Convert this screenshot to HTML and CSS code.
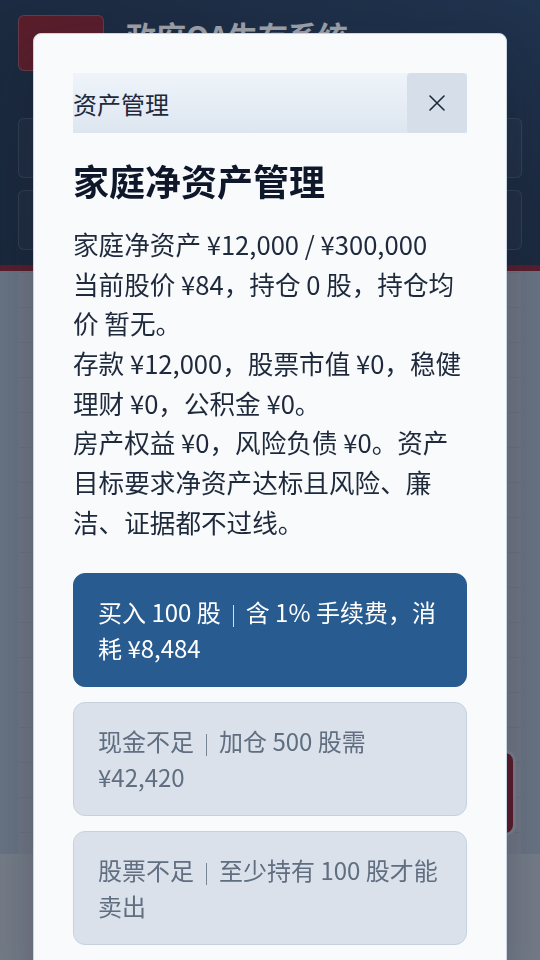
FILE: index.html
```html
<!DOCTYPE html>
<html lang="zh-CN">
<head>
<meta charset="utf-8">
<title>政府OA生存系统</title>
<link rel="stylesheet" href="styles.css">
</head>
<body>
<div class="app">
  <header class="topbar">
    <div class="brand">
      <div class="badge"></div>
      <div class="brand-text">
        <div class="brand-title">政府OA生存系统</div>
        <div class="brand-sub">第 1 天</div>
      </div>
    </div>
    <div class="stat"></div>
    <div class="stat"></div>
  </header>
  <div class="stripe"></div>
  <main class="main">
    <section class="panel">
      <button class="fab" type="button"></button>
    </section>
  </main>
  <nav class="bottombar"></nav>
</div>

<div class="backdrop">
  <div class="modal" role="dialog">
    <div class="modal-head">
      <div class="modal-label">资产管理</div>
      <button class="close" type="button" aria-label="关闭">
        <svg width="16" height="16" viewBox="0 0 16 16"><path d="M1 1 L15 15 M15 1 L1 15" stroke="#1e293b" stroke-width="1.6" fill="none" stroke-linecap="round"/></svg>
      </button>
    </div>
    <h2 class="title">家庭净资产管理</h2>
    <p class="desc">家庭净资产 ¥12,000 / ¥300,000<br>当前股价 ¥84，持仓 0 股，持仓均价 暂无。<br>存款 ¥12,000，股票市值 ¥0，稳健理财 ¥0，公积金 ¥0。<br>房产权益 ¥0，风险负债 ¥0。资产目标要求净资产达标且风险、廉洁、证据都不过线。</p>
    <div class="actions">
      <button class="act primary" type="button">买入 100 股<span class="sep"></span>含 1% 手续费，消耗 ¥8,484</button>
      <button class="act disabled" type="button">现金不足<span class="sep"></span>加仓 500 股需 ¥42,420</button>
      <button class="act disabled" type="button">股票不足<span class="sep"></span>至少持有 100 股才能卖出</button>
    </div>
  </div>
</div>
</body>
</html>
```

FILE: styles.css
```css
* { box-sizing: border-box; }
html, body { margin: 0; height: 100%; }
body {
  font-family: "Noto Sans CJK SC", "Noto Sans", sans-serif;
  background: #a7b4c0;
  overflow: hidden;
}
.app {
  height: 960px;
  display: flex;
  flex-direction: column;
}
.topbar {
  height: 265px;
  padding: 15px 18px;
  display: flex;
  flex-direction: column;
  gap: 12px;
  background: linear-gradient(200deg, #2d4768 0%, #26394f 45%, #233548 100%);
}
.brand {
  display: flex;
  gap: 22px;
  height: 56px;
  margin-bottom: 35px;
}
.badge {
  width: 86px;
  height: 56px;
  background: #8e242d;
  border: 1px solid rgba(255, 255, 255, 0.22);
  border-radius: 6px;
}
.brand-title {
  margin-top: 1px;
  font-size: 30px;
  line-height: 38px;
  font-weight: 700;
  color: #ffffff;
}
.brand-sub {
  font-size: 14px;
  color: #cbd5e1;
}
.stat {
  height: 60px;
  border: 1px solid rgba(255, 255, 255, 0.14);
  background: rgba(255, 255, 255, 0.04);
  border-radius: 6px;
}
.stripe {
  height: 6px;
  background: #8e242e;
}
.main {
  flex: 1;
  display: flex;
  padding: 0 19px;
}
.panel {
  flex: 1;
  position: relative;
  background-color: #b4bac2;
  background-image: linear-gradient(180deg, transparent 0, transparent 34px, #aab2ba 34px, #aab2ba 35px);
  background-size: 100% 35px;
  background-position: 0 2px;
}
.fab {
  position: absolute;
  right: 5px;
  top: 479px;
  width: 70px;
  height: 86px;
  background: #8f1f2d;
  border: 3px solid #c6cacf;
  border-radius: 11px;
}
.bottombar {
  height: 106px;
  background: #bbc3c8;
}
.backdrop {
  position: fixed;
  inset: 0;
  background: rgba(15, 23, 42, 0.4);
  padding: 33px 33px 0;
  overflow: hidden;
}
.modal {
  width: 474px;
  margin: 0 auto;
  background: #f8fafc;
  border: 1px solid #cbd5e1;
  border-radius: 8px;
  padding: 39px 39px 40px;
  box-shadow: 0 24px 60px rgba(15, 23, 42, 0.3);
}
.modal-head {
  display: flex;
  align-items: center;
  height: 60px;
  background: linear-gradient(180deg, #eff4fa 0%, #dde6f0 100%);
}
.modal-label {
  flex: 1;
  font-size: 24px;
  color: #1e293b;
}
.close {
  width: 60px;
  height: 60px;
  padding: 0;
  border: 0;
  border-radius: 4px;
  background: #d5dee9;
  display: flex;
  align-items: center;
  justify-content: center;
}
.title {
  margin: 23px 0 20px;
  font-size: 36px;
  line-height: 48px;
  font-weight: 700;
  color: #0f172a;
}
.desc {
  margin: 0 0 32px;
  font-size: 25.6px;
  line-height: 1.55;
  color: #1e293b;
}
.actions {
  display: flex;
  flex-direction: column;
  gap: 15px;
}
.act {
  display: block;
  width: 100%;
  text-align: left;
  font-family: inherit;
  font-size: 24px;
  line-height: 36px;
  padding: 20px 24px;
  border-radius: 12px;
  border: 1px solid;
}
.act.primary {
  background: #285b8f;
  border-color: #285b8f;
  color: #ffffff;
}
.act.disabled {
  background: #dae1ea;
  border-color: #c6d1dd;
  color: #5f6e80;
}
.sep {
  display: inline-block;
  width: 1px;
  height: 22px;
  margin: 0 12px;
  vertical-align: middle;
  background: currentColor;
  opacity: 0.8;
}
```
